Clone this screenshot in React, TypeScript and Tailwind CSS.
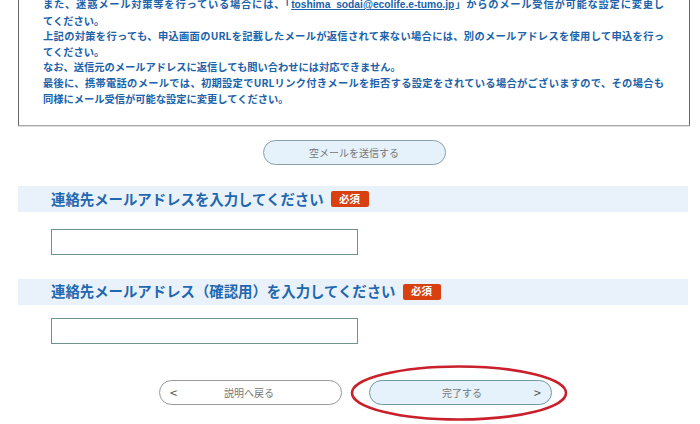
const jp = { fontFamily: '"Noto Sans CJK JP", "Noto Sans", sans-serif' };

const Required = () => (
  <span className="ml-[7px] inline-flex h-[16px] w-[38px] items-center justify-center rounded-[2px] bg-[#d8400f] text-[10.5px] font-bold leading-none text-white">
    必須
  </span>
);

const SectionHeader = ({ label }: { label: string }) => (
  <div className="flex h-[26px] w-[670px] items-center bg-[#e9f2fa] pl-[33px]">
    <span className="text-[14.4px] font-bold leading-none text-[#1f68b0]">{label}</span>
    <Required />
  </div>
);

const TextInput = () => (
  <div className="pl-[33px]">
    <input
      type="text"
      className="h-[26px] w-[307px] border border-[#6f9190] bg-white px-2 text-[12px] outline-none"
    />
  </div>
);

// full lines are stretched to the right edge, as the page wraps them
const Full = ({ children }: { children: React.ReactNode }) => (
  <span className="block text-justify [text-align-last:justify]">{children}</span>
);

export default function App() {
  return (
    <div className="min-h-[424px] w-[700px] overflow-hidden bg-white" style={jp}>
      <div className="pl-[18px]">
        {/* notice box */}
        <div className="-mt-[11px] w-[672px] border border-[#666] border-b-[#aaa] bg-white pb-[19px] pl-[24px] pt-[6px] shadow-[0_1px_0_#ddd]">
          <p className="w-[621px] text-[10.25px] font-bold leading-[15.6px] text-[#2062aa]">
            <Full>
              また、迷惑メール対策等を行っている場合には、「
              <span className="underline" style={{ fontFamily: '"Liberation Sans", "Noto Sans CJK JP", sans-serif' }}>
                toshima_sodai@ecolife.e-tumo.jp
              </span>
              」からのメール受信が可能な設定に変更し
            </Full>
            <span className="block">てください。</span>
            <Full>
              上記の対策を行っても、申込画面のURLを記載したメールが返信されて来ない場合には、別のメールアドレスを使用して申込を行っ
            </Full>
            <span className="block">てください。</span>
            <span className="block">なお、送信元のメールアドレスに返信しても問い合わせには対応できません。</span>
            <Full>
              最後に、携帯電話のメールでは、初期設定でURLリンク付きメールを拒否する設定をされている場合がございますので、その場合も
            </Full>
            <span className="block">同様にメール受信が可能な設定に変更してください。</span>
          </p>
        </div>

        <div className="flex w-[672px] justify-center pt-[14px]">
          <button className="h-[25px] w-[183px] rounded-full border border-[#8aa0a8] bg-[#e5f1fb] text-[10px] text-[#777]">
            空メールを送信する
          </button>
        </div>

        <div className="mt-[21px]">
          <SectionHeader label="連絡先メールアドレスを入力してください" />
        </div>
        <div className="mt-[16px]">
          <TextInput />
        </div>

        <div className="mt-[24px]">
          <SectionHeader label="連絡先メールアドレス（確認用）を入力してください" />
        </div>
        <div className="mt-[13px]">
          <TextInput />
        </div>

        <div className="mt-[36px] flex gap-[27px] pl-[141px]">
          <button className="relative flex h-[25px] w-[183px] items-center rounded-full border border-[#999] bg-white px-[10px] text-[10px] text-[#777]">
            <span className="text-[13px] leading-none text-[#555]">&lt;</span>
            <span className="flex-1 pr-[10px] text-center">説明へ戻る</span>
          </button>
          <div className="relative">
            <button className="flex h-[25px] w-[183px] items-center rounded-full border border-[#6f9aa6] bg-[#e5f1fb] px-[10px] text-[10px] text-[#777]">
              <span className="flex-1 pl-[10px] text-center">完了する</span>
              <span className="text-[13px] leading-none text-[#555]">&gt;</span>
            </button>
            <svg
              className="pointer-events-none absolute left-[-19px] top-[-16px]"
              width="220"
              height="58"
              viewBox="0 0 220 58"
            >
              <ellipse
                cx="109"
                cy="29"
                rx="107"
                ry="26.5"
                fill="none"
                stroke="#c9202c"
                strokeWidth="2.6"
              />
            </svg>
          </div>
        </div>
      </div>
    </div>
  );
}
